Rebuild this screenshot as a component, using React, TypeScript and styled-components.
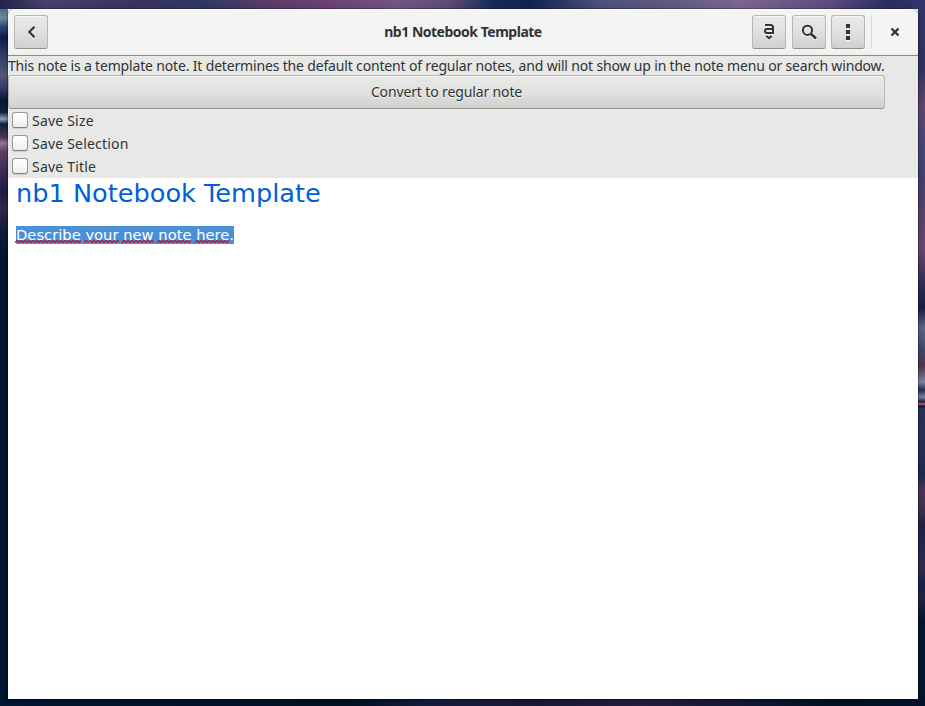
import React from "react";
import styled, { createGlobalStyle } from "styled-components";

const Global = createGlobalStyle`
  * { box-sizing: border-box; }
  body { margin: 0; overflow: hidden; }
`;

const Desktop = styled.div`
  width: 925px;
  height: 706px;
  padding: 9px 7px 7px 8px;
  background:
    linear-gradient(90deg, #20244b 0, #45416b 45px, #3d3160 130px, #2e3764 200px, #5a3c66 270px, #6b4272 330px, #6f5680 400px, #5d4a77 450px, #142a57 495px, #102450 530px, #4d4f7c 600px, #615b7f 680px, #7d668e 740px, #5c4b80 830px, #292d60 890px, #30366c 925px) top / 100% 9px no-repeat,
    linear-gradient(90deg, #001634 0, #001126 350px, #151d40 430px, #19183a 540px, #251e40 640px, #151a3a 730px, #001126 830px, #00132d 925px) bottom / 100% 7px no-repeat,
    linear-gradient(#477081 9px, #718d9c 18px, #28467a 27px, #0b1d4b 38px, #273763 50px, #55577a 75px, #40406f 86px, #071937 100px, #111e42 112px, #8ba5b7 119px, #101f43 124px, #583759 138px, #8a7c9a 143px, #603d65 152px, #432e58 170px, #1b2148 190px, #332749 208px, #101d3d 230px, #001634 255px, #001634 706px) left / 8px 100% no-repeat,
    linear-gradient(#30366c 0, #343461 70px, #60466f 105px, #484878 140px, #43416d 180px, #5a436d 220px, #684772 250px, #302c55 285px, #181f43 308px, #5c668b 328px, #3c496e 350px, #56344f 366px, #7688a5 382px, #282d54 390px, #7188a5 397px, #251c3a 402px, #bb6688 404px, #17112d 406px, #25365d 409px, #292e55 450px, #172b50 475px, #4d345e 488px, #403052 510px, #241f43 525px, #1b284f 540px, #332b51 570px, #14254b 582px, #242447 600px, #001634 620px) right / 7px 100% no-repeat;
`;

const Window = styled.main`
  height: 690px;
  display: flex;
  flex-direction: column;
  overflow: hidden;
  border-radius: 7px 7px 0 0;
  background: #fff;
  box-shadow: 0 0 0 1px rgba(0, 0, 0, 0.23), 0 2px 6px rgba(0, 0, 0, 0.3);
  color: #2e3436;
  font: 14px/19px "Noto Sans", sans-serif;
`;

const HeaderBar = styled.header`
  height: 47px;
  flex: none;
  display: grid;
  grid-template-columns: 1fr auto 1fr;
  align-items: center;
  padding: 0 6px 1px;
  background: linear-gradient(#f4f4f4 0, #f3f3f3 43px, #ededeb 46px);
  border-bottom: 1px solid #8b8e8b;
  box-shadow: inset 0 1px #fff;
`;

const Title = styled.h1`
  margin: 0;
  font-size: 14px;
  font-weight: 700;
  letter-spacing: -0.49px;
`;

const Controls = styled.div<{ $end?: boolean }>`
  display: flex;
  align-items: center;
  justify-content: ${(p) => (p.$end ? "flex-end" : "flex-start")};
`;

const Button = styled.button`
  padding: 0;
  border: 1px solid #b6b6b3;
  border-bottom-color: #91918c;
  border-radius: 3px;
  background: linear-gradient(#e9e9e7, #e1e1df 50%, #d0d0ce);
  box-shadow: inset 0 1px #f6f6f5;
  color: #2e3436;
  font: inherit;
`;

const ToolButton = styled(Button)<{ $gap?: number }>`
  width: 34px;
  height: 34px;
  margin-left: ${(p) => p.$gap ?? 0}px;
  display: flex;
  align-items: center;
  justify-content: center;
`;

const Divider = styled.span`
  width: 1px;
  height: 34px;
  margin: 0 15px 0 6px;
  background: #d9d9d8;
`;

const CloseButton = styled.button`
  width: 16px;
  height: 16px;
  margin-right: 9px;
  padding: 0;
  border: 0;
  background: none;
  color: #2e3436;
  display: flex;
`;

const Icon = styled.svg`
  width: 16px;
  height: 16px;
  display: block;
  fill: none;
  stroke: #2e3436;
  filter: drop-shadow(0 1px rgba(255, 255, 255, 0.75));
`;

const TemplateBar = styled.section`
  height: 122px;
  flex: none;
  display: flex;
  flex-direction: column;
  align-items: flex-start;
  background: #e8e8e6;
`;

const Notice = styled.p`
  height: 19px;
  margin: 0;
  white-space: nowrap;
  letter-spacing: -0.166px;
`;

const ConvertButton = styled(Button)`
  width: 877px;
  height: 34px;
  padding-bottom: 2px;
  letter-spacing: -0.13px;
  text-shadow: 0 1px rgba(255, 255, 255, 0.7);
`;

const Option = styled.label`
  height: 23px;
  display: flex;
  align-items: center;
  gap: 4px;
  padding-left: 4px;
  letter-spacing: 0.2px;
`;

const Checkbox = styled.input`
  appearance: none;
  width: 16px;
  height: 16px;
  margin: 0 0 1px;
  border: 1px solid #989893;
  border-bottom-color: #80807c;
  border-radius: 3px;
  background: linear-gradient(#fff, #eeeeec);
  box-shadow: 0 1px 1px rgba(0, 0, 0, 0.12);
`;

const Editor = styled.article`
  flex: 1;
  padding: 0 8px;
  font-family: "DejaVu Sans", sans-serif;
`;

const NoteTitle = styled.h2`
  height: 31px;
  margin: 0 0 17px;
  color: #005fd8;
  font-size: 25.6px;
  font-weight: 400;
  line-height: 31px;
`;

const Selection = styled.p`
  width: fit-content;
  height: 18px;
  margin: 0;
  background: #4a90d9;
  color: #fff;
  font-size: 14.73px;
  line-height: 18px;
  white-space: pre;
`;

const Misspelled = styled.span`
  position: relative;
`;

const Squiggle = styled.svg`
  position: absolute;
  left: -1px;
  bottom: 0;
  width: calc(100% + 1px);
  height: 3px;
  fill: none;
  stroke: #d01020;
  stroke-width: 1.3;
`;

const squigglePath = "M0 2.5" + Array.from({ length: 25 }, () => "l2 -2l2 2").join("");

const options = ["Save Size", "Save Selection", "Save Title"];
const words = ["Describe", "your", "new", "note", "here"];

export default function App() {
  return (
    <Desktop>
      <Global />
      <Window>
        <HeaderBar>
          <Controls>
            <ToolButton aria-label="Back">
              <Icon viewBox="0 0 16 16"><path d="M11.500 2.800 6.300 8l5.200 5.200" strokeWidth="2.200" /></Icon>
            </ToolButton>
          </Controls>
          <Title>nb1 Notebook Template</Title>
          <Controls $end>
            <ToolButton aria-label="Text format">
              <Icon viewBox="0 0 16 16">
                <path d="M4 1h5.500Q12 1 12 3.500V10M12 5H6Q4 5 4 7t2 2h6" strokeWidth="2" />
                <path d="M5.300 12 8 14.300 10.700 12" strokeWidth="2" />
              </Icon>
            </ToolButton>
            <ToolButton $gap={6} aria-label="Search">
              <Icon viewBox="0 0 16 16"><circle cx="6.500" cy="6.300" r="4.600" strokeWidth="2" /><path d="m10 10 5 4.500" strokeWidth="2.400" /></Icon>
            </ToolButton>
            <ToolButton $gap={5} aria-label="Menu">
              <Icon viewBox="0 0 16 16"><path d="M8 0v4m0 2v4m0 2v4" strokeWidth="4" /></Icon>
            </ToolButton>
            <Divider />
            <CloseButton aria-label="Close">
              <Icon viewBox="0 0 16 16"><path d="m4.500 4.500 7 7m0-7-7 7" strokeWidth="2.300" /></Icon>
            </CloseButton>
          </Controls>
        </HeaderBar>
        <TemplateBar>
          <Notice>This note is a template note. It determines the default content of regular notes, and will not show up in the note menu or search window.</Notice>
          <ConvertButton>Convert to regular note</ConvertButton>
          {options.map((label) => (
            <Option key={label}><Checkbox type="checkbox" />{label}</Option>
          ))}
        </TemplateBar>
        <Editor>
          <NoteTitle>nb1 Notebook Template</NoteTitle>
          <Selection>
            {words.map((word, i) => (
              <React.Fragment key={word}>
                {i > 0 && " "}
                <Misspelled>{word}<Squiggle><path d={squigglePath} /></Squiggle></Misspelled>
              </React.Fragment>
            ))}.
          </Selection>
        </Editor>
      </Window>
    </Desktop>
  );
}
